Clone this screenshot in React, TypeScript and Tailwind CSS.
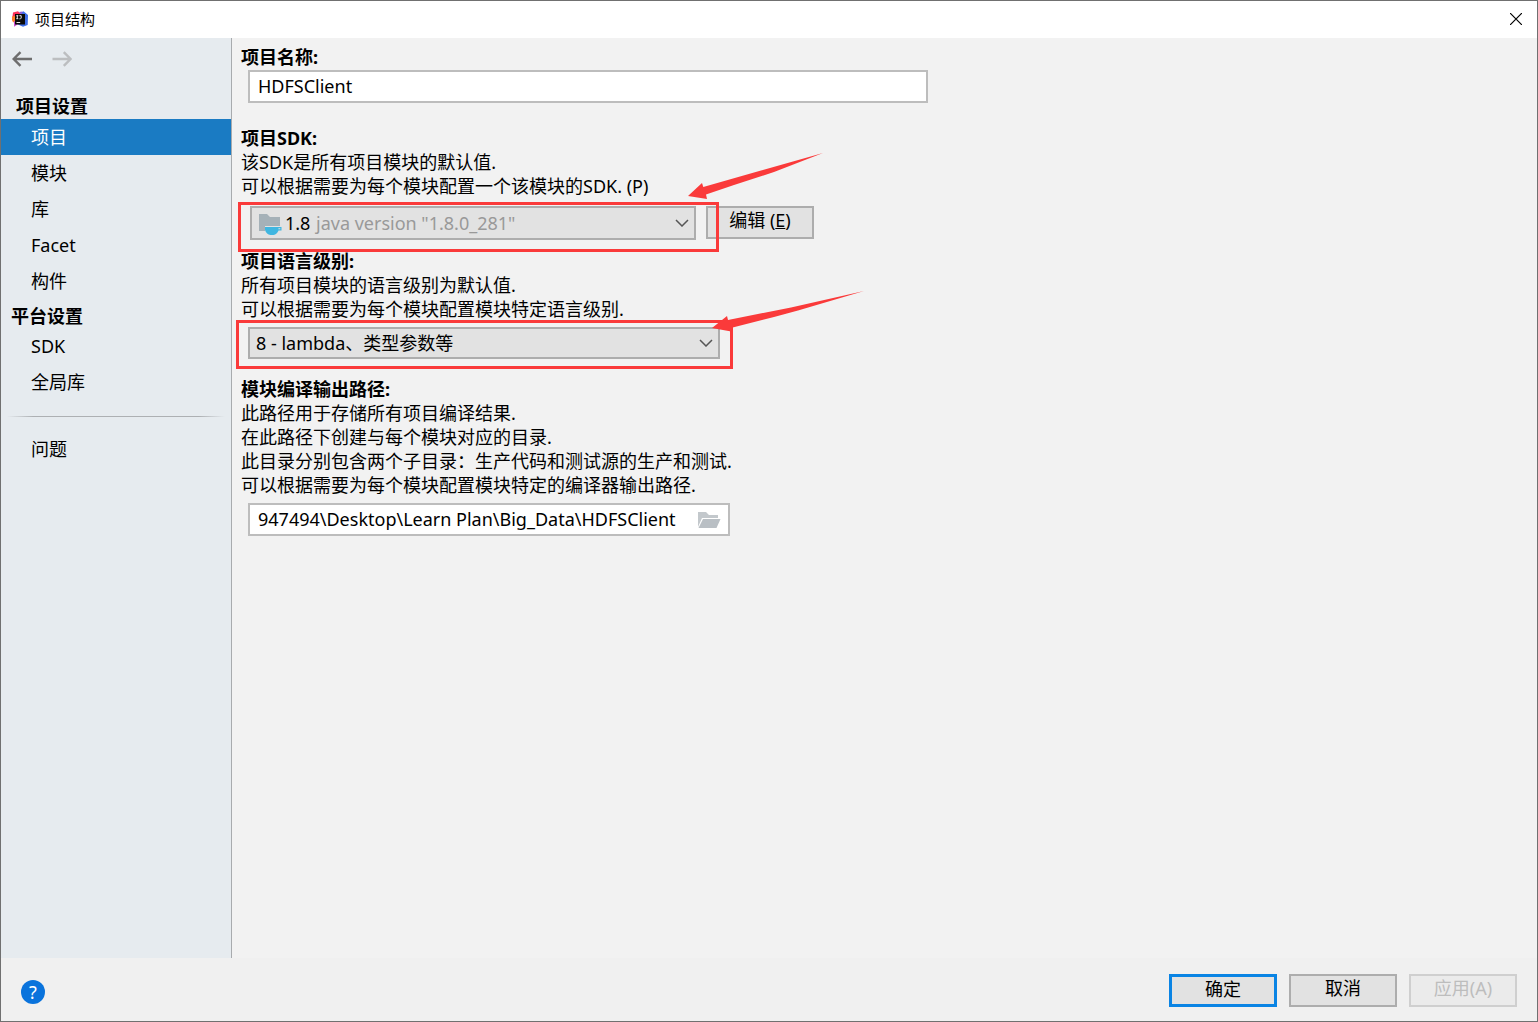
import React, { useState } from 'react';

const chevron = (
  <svg viewBox="0 0 14 8" className="pointer-events-none absolute top-1/2 right-[7px] h-2 w-3.5 -translate-y-1/2" fill="none" stroke="#555" strokeWidth="1.5">
    <path d="M1 1l6 6 6-6" />
  </svg>
);

function WindowLogo() {
  return (
    <svg viewBox="0 0 16 16" className="size-4" aria-hidden="true">
      <path d="M1 1.500L6 .3l3 2.700-2 9-4 0L0 9z" fill="#fc3158" />
      <path d="M0 5.500l3-.5 1 8-3.500-2.500z" fill="#fd8224" />
      <path d="M2 10l6 2-6 3.700z" fill="#c94fd0" />
      <path d="M8.500 2l3-1.800L16 4l-.3 10-4.700 1.700L6 13.500z" fill="#3f6fe8" />
      <path d="M7 1l3.500-.5L9.500 4z" fill="#8a5be0" />
      <path d="M3 3h10v10.500H3z" fill="#0a0a0a" />
      <path d="M4.300 4.700h2M5.300 4.700v3M4.300 7.700h2M7.400 4.700h1.800v2.400l-.8.800h-1M4.500 11.500h3.700" stroke="#fff" strokeWidth=".9" fill="none" />
    </svg>
  );
}

function NavItem({ label, active, onClick }: { label: string; active: boolean; onClick: () => void }) {
  return (
    <li>
      <button
        type="button"
        onClick={onClick}
        aria-current={active ? 'page' : undefined}
        className={active ? 'block h-9 w-full bg-[#1a7bc3] pl-[30px] text-left text-white' : 'block h-9 w-full pb-px pl-[30px] text-left'}
      >
        {label}
      </button>
    </li>
  );
}

function Description({ lines }: { lines: string[] }) {
  return (
    <div>
      {lines.map((line) => (
        <p key={line}>{line}</p>
      ))}
    </div>
  );
}

const selectClass =
  'block w-full appearance-none border-2 border-[#adadad] bg-[#e2e2e2] text-black outline-none';

export default function App() {
  const [page, setPage] = useState('项目');
  const [name, setName] = useState('HDFSClient');
  const [output, setOutput] = useState('947494\\Desktop\\Learn Plan\\Big_Data\\HDFSClient');

  const item = (label: string) => (
    <NavItem key={label} label={label} active={page === label} onClick={() => setPage(label)} />
  );

  return (
    <div className="flex min-h-screen flex-col border border-[#707070] bg-[#f0f0f0] font-['Noto_Sans','Noto_Sans_CJK_SC',sans-serif] text-[18px] leading-6 text-black">
      <header className="flex h-[37px] items-center bg-white pr-[11px] pb-px pl-[11px]">
        <WindowLogo />
        <h1 className="ml-[7px] text-[15px]">项目结构</h1>
        <button type="button" aria-label="关闭" className="ml-auto p-1">
          <svg viewBox="0 0 12 12" className="size-3" stroke="#000" strokeWidth="1.2">
            <path d="M0 0l12 12M12 0L0 12" />
          </svg>
        </button>
      </header>

      <div className="flex flex-1">
        <nav className="w-[231px] shrink-0 border-r border-[#a8abae] bg-[#e6ebef]">
          <div className="flex gap-5 pt-[13px] pl-[11px]">
            <button type="button" aria-label="后退">
              <svg viewBox="0 0 20 16" className="h-4 w-5" fill="none" stroke="#6e6e6e" strokeWidth="2.4">
                <path d="M20 8H2M8.500 1.200L1.700 8l6.800 6.800" />
              </svg>
            </button>
            <button type="button" aria-label="前进">
              <svg viewBox="0 0 20 16" className="h-4 w-5" fill="none" stroke="#bcbec0" strokeWidth="2.4">
                <path d="M.5 8h18M11.800 1.200L18.600 8l-6.800 6.800" />
              </svg>
            </button>
          </div>
          <h2 className="mt-[27px] h-[25px] pl-[15px] font-bold">项目设置</h2>
          <ul>{['项目', '模块', '库', 'Facet', '构件'].map(item)}</ul>
          <h2 className="flex h-[29px] items-end pl-[10px] font-bold">平台设置</h2>
          <ul>{['SDK', '全局库'].map(item)}</ul>
          <div className="mx-1.5 mt-4 mb-[14px] h-px bg-[linear-gradient(to_right,transparent,#adb0b3_12%,#adb0b3_88%,transparent)]" />
          <ul>{item('问题')}</ul>
        </nav>

        <main className="min-w-0 flex-1 bg-[#f2f2f2] pt-[7px] pl-[9px]">
          <section>
            <label htmlFor="name" className="block font-bold">项目名称:</label>
            <input
              id="name"
              value={name}
              onChange={(e) => setName(e.target.value)}
              className="mt-px ml-[7px] block h-[33px] w-[680px] max-w-full border-2 border-[#bdbdbd] bg-white px-2 pb-0.5 outline-none"
            />
          </section>

          <section className="mt-[23px]">
            <label htmlFor="sdk" className="block font-bold">项目SDK:</label>
            <Description lines={['该SDK是所有项目模块的默认值.', '可以根据需要为每个模块配置一个该模块的SDK. (P)']} />
            <div className="mt-2 ml-[9px] flex items-start gap-[10px]">
              <div className="relative w-[446px]">
                <select id="sdk" className={`${selectClass} h-[34px] pl-[33px]`}>
                  <option>1.8</option>
                </select>
                <svg viewBox="0 0 24 22" className="pointer-events-none absolute top-[7px] left-2 h-[22px] w-6" aria-hidden="true">
                  <path d="M1 1h8l3 3h10v9H7v5H1z" fill="#a5b1b8" />
                  <path d="M7 14h16.500v3.500H20.500q-1.500 3.700-5 4.500h-3Q8.500 21.500 7 17z" fill="#40b6e0" />
                  <path d="M20.500 15.200h1.800v1.100h-2z" fill="#e2e2e2" />
                </svg>
                <span className="pointer-events-none absolute top-[5px] left-[66px] text-[#999]">java version "1.8.0_281"</span>
                {chevron}
                <div className="pointer-events-none absolute -top-1 -right-[23px] -bottom-3 -left-3 z-10 border-[3px] border-[#fa3a3a]" />
                <svg viewBox="688 153 136 47" className="pointer-events-none absolute -top-[53px] left-[438px] z-10 h-[47px] w-[136px]" aria-hidden="true">
                  <path d="M688 196L702 183l1.300 4L761 170.500 823 153 774 172 734 185 706 194.500l1 4.500z" fill="#fa3a3a" />
                </svg>
              </div>
              <button type="button" className="h-[33px] w-[108px] border-2 border-[#adadad] bg-[#e2e2e2] pb-1.5">
                编辑 (<u>E</u>)
              </button>
            </div>
          </section>

          <section className="mt-[9px]">
            <label htmlFor="level" className="block font-bold">项目语言级别:</label>
            <Description lines={['所有项目模块的语言级别为默认值.', '可以根据需要为每个模块配置模块特定语言级别.']} />
            <div className="relative mt-[6px] ml-[7px] w-[472px]">
              <select id="level" className={`${selectClass} h-8 pl-[6px]`}>
                <option>8 - lambda、类型参数等</option>
              </select>
              {chevron}
              <div className="pointer-events-none absolute -top-[7px] -right-[13px] -bottom-[10px] -left-3 z-10 border-[3px] border-[#fa3a3a]" />
              <svg viewBox="712 290 153 43" className="pointer-events-none absolute -top-[37px] left-[464px] z-10 h-[43px] w-[153px]" aria-hidden="true">
                <path d="M712 328L727 316l1 4L791 307.500 864 291 798 310.500 774 317 732.700 327.500l-1.500 4z" fill="#fa3a3a" />
              </svg>
            </div>
          </section>

          <section className="mt-[18px]">
            <label htmlFor="output" className="block font-bold">模块编译输出路径:</label>
            <Description
              lines={[
                '此路径用于存储所有项目编译结果.',
                '在此路径下创建与每个模块对应的目录.',
                '此目录分别包含两个子目录：生产代码和测试源的生产和测试.',
                '可以根据需要为每个模块配置模块特定的编译器输出路径.',
              ]}
            />
            <div className="mt-[6px] ml-[7px] flex h-[33px] w-[482px] items-center border-2 border-[#bdbdbd] bg-white pr-[7px]">
              <input
                id="output"
                value={output}
                onChange={(e) => setOutput(e.target.value)}
                className="h-full min-w-0 flex-1 bg-transparent pb-0.5 pl-2 outline-none"
              />
              <button type="button" aria-label="浏览">
                <svg viewBox="0 0 24 18" className="h-[18px] w-6" aria-hidden="true">
                  <path d="M1 1h8l3 3h9v3H5L1 16z" fill="#c3c8cc" />
                  <path d="M6 8h17.500l-4 9H1.500z" fill="#b9bfc4" />
                </svg>
              </button>
            </div>
          </section>
        </main>
      </div>

      <footer className="flex h-[63px] items-center gap-3 px-5 pt-0.5">
        <button type="button" aria-label="帮助" className="mt-0.5 mr-auto flex size-6 items-center justify-center rounded-full bg-[#0a73dc] text-white">
          ?
        </button>
        <button type="button" className="h-[33px] w-[108px] border-[3px] border-[#0a84e4] bg-[#e2e2e2] pb-1.5">确定</button>
        <button type="button" className="h-[33px] w-[108px] border-2 border-[#adadad] bg-[#e2e2e2] pb-1.5">取消</button>
        <button type="button" disabled className="h-[33px] w-[108px] border-2 border-[#cfcfcf] bg-[#ebebeb] pb-1.5 text-[#bdbdbd]">应用(A)</button>
      </footer>
    </div>
  );
}
